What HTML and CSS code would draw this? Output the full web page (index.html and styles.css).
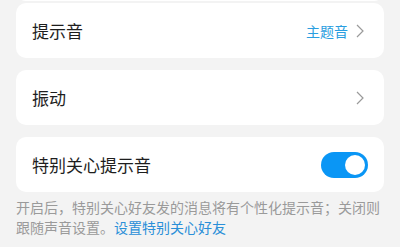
FILE: index.html
```html
<!DOCTYPE html>
<html lang="zh-CN">
<head>
  <meta charset="UTF-8">
  <meta name="viewport" content="width=device-width, initial-scale=1.0">
  <title>提示音设置</title>
  <link rel="stylesheet" href="styles.css">
</head>
<body>
  <div class="page">
    <div class="card card-prev"></div>

    <div class="card row">
      <span class="row-title">提示音</span>
      <span class="row-value">主题音</span>
      <svg class="chevron" viewBox="0 0 8 14" width="8" height="14">
        <path d="M1 1 L7 7 L1 13" fill="none" stroke="#9a9a9a" stroke-width="1.2"/>
      </svg>
    </div>

    <div class="card row">
      <span class="row-title">振动</span>
      <svg class="chevron" viewBox="0 0 8 14" width="8" height="14">
        <path d="M1 1 L7 7 L1 13" fill="none" stroke="#9a9a9a" stroke-width="1.2"/>
      </svg>
    </div>

    <div class="card row">
      <span class="row-title">特别关心提示音</span>
      <div class="switch on"><div class="knob"></div></div>
    </div>

    <div class="hint">
      <div class="hint-line">开启后，特别关心好友发的消息将有个性化提示音；关闭则</div>
      <div class="hint-line"><span>跟随声音设置。</span><a class="hint-link" href="#">设置特别关心好友</a></div>
    </div>
  </div>
</body>
</html>
```

FILE: styles.css
```css
body {
  margin: 0;
  background: #f3f3f3;
  font-family: "Noto Sans CJK SC", "Noto Sans", sans-serif;
  overflow: hidden;
}
.page {
  padding: 0 16px;
}
.card {
  background: #fff;
  border-radius: 10px;
  margin-bottom: 12px;
}
.card-prev {
  height: 30px;
  margin-top: -29px;
  margin-bottom: 2px;
}
.row {
  height: 55px;
  display: flex;
  align-items: center;
  padding: 0 16px;
}
.row-title {
  flex: 1;
  font-size: 17px;
  color: #1e1e1e;
  margin-top: -1px;
}
.row-value {
  font-size: 14px;
  color: #2a9ee0;
  margin-right: 8px;
}
.chevron {
  margin-right: 4px;
}
.switch {
  width: 47px;
  height: 26px;
  border-radius: 13px;
  background: #0a96f5;
  display: flex;
  align-items: center;
  justify-content: flex-end;
  padding: 0 3px;
  box-sizing: border-box;
}
.knob {
  width: 20px;
  height: 20px;
  border-radius: 50%;
  background: #fff;
}
.hint {
  margin-top: -7px;
  font-size: 14px;
  line-height: 20px;
  color: #9a9a9a;
  white-space: nowrap;
}
.hint-link {
  color: #2a8fd8;
  text-decoration: none;
}
```
